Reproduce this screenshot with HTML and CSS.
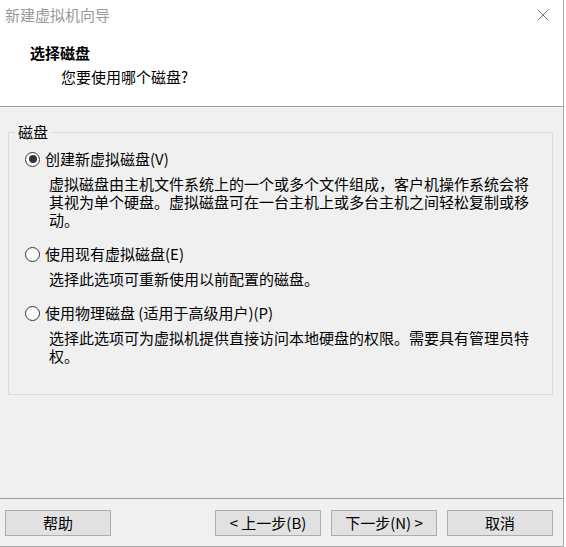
FILE: index.html
```html
<!DOCTYPE html>
<html lang="zh-CN">
<head>
<meta charset="utf-8">
<title>新建虚拟机向导</title>
<link rel="stylesheet" href="styles.css">
</head>
<body>
<div class="window">
  <div class="top">
    <div class="titlebar">
      <span class="title">新建虚拟机向导</span>
      <svg class="close" width="12" height="12" viewBox="0 0 12 12" aria-hidden="true">
        <path d="M0.5 0.5 L11.5 11.5 M11.5 0.5 L0.5 11.5" stroke="#7a7a7a" stroke-width="1" fill="none"/>
      </svg>
    </div>
    <div class="header">
      <div class="heading">选择磁盘</div>
      <div class="subheading">您要使用哪个磁盘?</div>
    </div>
  </div>
  <div class="content">
    <fieldset class="group">
      <legend class="legend">磁盘</legend>
      <div class="option">
        <div class="opt-row">
          <span class="radio checked"></span>
          <span class="opt-label">创建新虚拟磁盘(V)</span>
        </div>
        <div class="desc">虚拟磁盘由主机文件系统上的一个或多个文件组成，客户机操作系统会将其视为单个硬盘。虚拟磁盘可在一台主机上或多台主机之间轻松复制或移动。</div>
      </div>
      <div class="option">
        <div class="opt-row">
          <span class="radio"></span>
          <span class="opt-label">使用现有虚拟磁盘(E)</span>
        </div>
        <div class="desc">选择此选项可重新使用以前配置的磁盘。</div>
      </div>
      <div class="option">
        <div class="opt-row">
          <span class="radio"></span>
          <span class="opt-label">使用物理磁盘 (适用于高级用户)(P)</span>
        </div>
        <div class="desc">选择此选项可为虚拟机提供直接访问本地硬盘的权限。需要具有管理员特权。</div>
      </div>
    </fieldset>
  </div>
  <div class="footer">
    <button class="btn">帮助</button>
    <div class="nav">
      <button class="btn">&lt; 上一步(B)</button>
      <button class="btn">下一步(N) &gt;</button>
    </div>
    <button class="btn">取消</button>
  </div>
</div>
</body>
</html>
```

FILE: styles.css
```css
html, body {
  margin: 0;
  padding: 0;
  background: #ffffff;
}

body {
  font-family: "Noto Sans CJK SC", "Noto Sans", sans-serif;
  font-size: 15px;
  line-height: 18px;
  color: #000000;
}

.window {
  width: 563px;
  height: 546px;
  border-right: 1px solid #a9a9a9;
  border-bottom: 1px solid #a9a9a9;
  background: #f0f0f0;
  display: flex;
  flex-direction: column;
}

.top {
  background: #ffffff;
  height: 106px;
  border-bottom: 1px solid #a0a0a0;
  flex: none;
}

.titlebar {
  height: 30px;
  display: flex;
  align-items: center;
  justify-content: space-between;
  padding-left: 5px;
  padding-right: 14px;
}

.title {
  color: #999999;
}

.close {
  display: block;
}

.header {
  padding-left: 30px;
}

.heading {
  margin-top: 14px;
  font-weight: 700;
}

.subheading {
  margin-top: 6px;
  margin-left: 31px;
}

.content {
  flex: 1;
}

.group {
  margin: 16px 10px 0 8px;
  padding: 9px 0 29px 0;
  border: 1px solid #dcdcdc;
  min-width: 0;
}

.legend {
  margin-left: 6px;
  padding: 0 3px;
}

.option {
  padding-left: 16px;
}

.option + .option {
  margin-top: 16px;
}

.opt-row {
  display: flex;
  align-items: center;
  gap: 5px;
}

.radio {
  width: 15px;
  height: 15px;
  box-sizing: border-box;
  border: 1px solid #333333;
  border-radius: 50%;
  background: #ffffff;
  display: flex;
  align-items: center;
  justify-content: center;
  flex: none;
}

.radio.checked::after {
  content: "";
  width: 8px;
  height: 8px;
  border-radius: 50%;
  background: #333333;
}

.desc {
  margin-top: 7px;
  margin-left: 24px;
  width: 485px;
}

.footer {
  flex: none;
  height: 36px;
  border-top: 1px solid #a0a0a0;
  padding: 11px 10px 0 5px;
  display: flex;
  align-items: flex-start;
  gap: 10px;
}

.nav {
  margin-left: auto;
  display: flex;
  gap: 10px;
}

.btn {
  width: 106px;
  height: 26px;
  box-sizing: border-box;
  border: 1px solid #adadad;
  background: #e1e1e1;
  font-family: inherit;
  font-size: 15px;
  line-height: 18px;
  color: #000000;
  padding: 0;
  margin: 0;
}
```
